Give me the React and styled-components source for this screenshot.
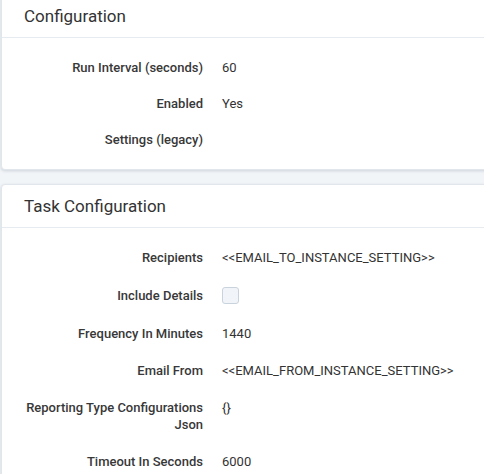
import React from 'react';
import styled, { createGlobalStyle } from 'styled-components';

const GlobalStyle = createGlobalStyle`
  html, body {
    margin: 0;
    padding: 0;
    background: #f2f5f8;
    overflow: hidden;
  }
  body {
    font-family: Roboto, "Liberation Sans", Arial, sans-serif;
    color: #333;
  }
`;

const Page = styled.div`
  display: flex;
  flex-direction: column;
  gap: 14px;
  margin-top: -6px;
  padding-left: 1px;
  width: 510px;
`;

const Card = styled.section`
  background: #fff;
  border: 1px solid #e1e6ec;
  border-radius: 4px;
  box-shadow: 0 1px 3px rgba(40, 60, 90, 0.18);
`;

const CardHeader = styled.div`
  height: 42px;
  display: flex;
  align-items: center;
  padding-left: 22px;
  border-bottom: 1px solid #e6ebf1;
  font-size: 17px;
  font-weight: 400;
  color: #333;
`;

const CardBody = styled.div`
  padding: ${p => p.$top}px 0 ${p => p.$bottom}px;
`;

const Row = styled.div`
  display: grid;
  grid-template-columns: 188px 1fr;
  column-gap: 19px;
  padding: ${p => (p.$compact ? '9px' : '10px')} 0 ${p => (p.$compact ? '9px' : '10px')} 13px;
  font-size: 13px;
  line-height: ${p => (p.$compact ? '18px' : '17px')};
  min-height: 17px;
`;

const Label = styled.div`
  text-align: right;
  font-weight: 500;
  color: #383838;
  align-self: center;
`;

const Value = styled.div`
  color: #333;
  display: flex;
  align-items: ${p => (p.$top ? 'flex-start' : 'center')};
`;

const Checkbox = styled.span`
  display: inline-block;
  width: 15px;
  height: 15px;
  margin: 1px 0;
  border: 1px solid #c9d3de;
  border-radius: 3px;
  background: #f1f5f9;
`;

const Field = ({ label, compact, top, children }) => (
  <Row $compact={compact}>
    <Label>{label}</Label>
    <Value $top={top}>{children}</Value>
  </Row>
);

export default function App() {
  return (
    <>
      <GlobalStyle />
      <Page>
        <Card>
          <CardHeader>Configuration</CardHeader>
          <CardBody $top={12} $bottom={11}>
            <Field compact label="Run Interval (seconds)">60</Field>
            <Field compact label="Enabled">Yes</Field>
            <Field compact label="Settings (legacy)" />
          </CardBody>
        </Card>
        <Card>
          <CardHeader>Task Configuration</CardHeader>
          <CardBody $top={11} $bottom={12}>
            <Field label="Recipients">&lt;&lt;EMAIL_TO_INSTANCE_SETTING&gt;&gt;</Field>
            <Field label="Include Details"><Checkbox /></Field>
            <Field label="Frequency In Minutes">1440</Field>
            <Field label="Email From">&lt;&lt;EMAIL_FROM_INSTANCE_SETTING&gt;&gt;</Field>
            <Field top label="Reporting Type Configurations Json">{'{}'}</Field>
            <Field label="Timeout In Seconds">6000</Field>
          </CardBody>
        </Card>
      </Page>
    </>
  );
}
